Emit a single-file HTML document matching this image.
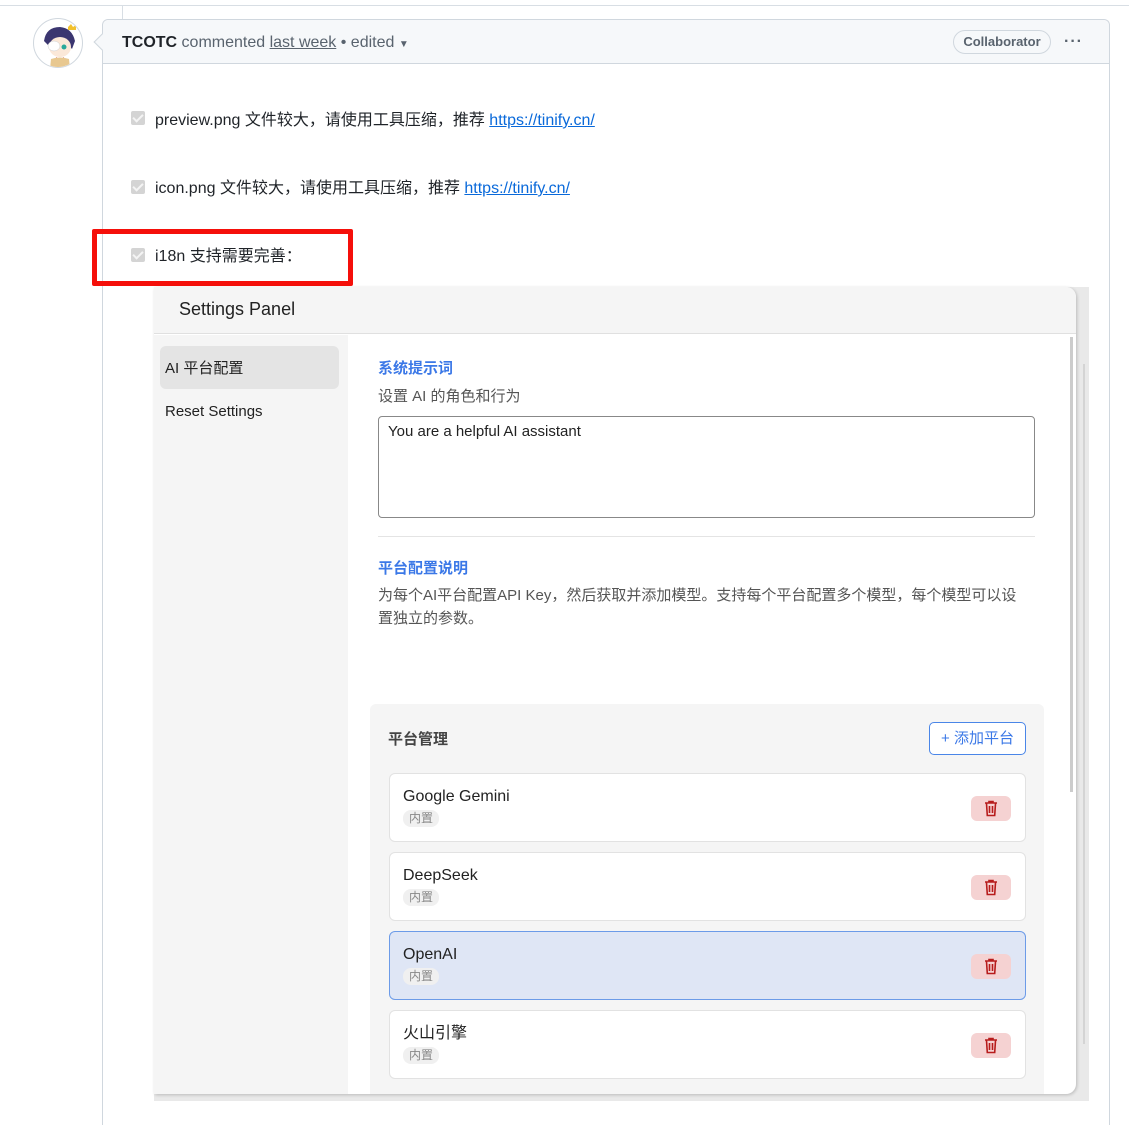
<!DOCTYPE html>
<html style="height:1125px;overflow:hidden"><head><meta charset="utf-8">
<style>
*{box-sizing:border-box;margin:0;padding:0}
body{width:1129px;height:1125px;background:#fff;position:relative;overflow:hidden;font-family:"Liberation Sans","Noto Sans CJK SC",sans-serif;color:#1f2328}
.abs{position:absolute}
.cb{width:14px;height:14px;background:#d4d4d4;border-radius:2px}
.cb:after{content:"";position:absolute;left:4px;top:1px;width:4px;height:8px;border:solid #f4f4f4;border-width:0 2px 2px 0;transform:rotate(45deg)}
.li{font-size:16px;color:#1f2328;line-height:20px}
.li a{color:#0969da;text-decoration:underline}
.card{position:absolute;left:389px;width:637px;height:69px;background:#fff;border:1px solid #e2e2e2;border-radius:6px}
.card .n{position:absolute;left:13px;top:13px;font-size:16px;color:#222;line-height:20px}
.card .t{position:absolute;left:13px;top:36px;font-size:12px;color:#888;background:#f0f0f0;border-radius:8px;padding:0 6px;line-height:17px}
.card .d{position:absolute;right:14px;top:22px;width:40px;height:25px;background:#f5d2d2;border-radius:6px}
.card .d svg{position:absolute;left:12px;top:4px}
</style></head><body>
<div class="abs" style="left:0;top:5px;width:1129px;height:1px;background:#d8dee4"></div>
<div class="abs" style="left:122px;top:5px;width:1px;height:15px;background:#d8dee4"></div>
<div class="abs" style="left:33px;top:18px;width:50px;height:50px;border-radius:50%;border:1px solid #d0d7de;overflow:hidden;background:#fff">
<svg width="50" height="50"><path d="M10 22 Q12 8 26 8 Q38 9 41 22 L38 30 Q30 18 16 28Z" fill="#3b3670"/><ellipse cx="26" cy="28" rx="11" ry="10" fill="#fbe8d8"/><ellipse cx="20" cy="27" rx="6" ry="5" fill="#fff" stroke="#ccc" stroke-width=".5"/><circle cx="30" cy="28" r="2.5" fill="#2aa89a"/><path d="M22 38 L26 41 L30 38 L28 44 L24 44Z" fill="#c62828"/><path d="M17 40 Q26 37 35 40 L36 50 L16 50Z" fill="#e8c890"/><path d="M34 8 l3 -3 l2 3 l3-2 v5 h-8z" fill="#f2c12e"/></svg></div>
<div class="abs" style="left:102px;top:19px;width:1008px;height:1106px;border:1px solid #d0d7de;border-bottom:none;border-radius:6px 6px 0 0"></div>
<div class="abs" style="left:103px;top:20px;width:1006px;height:44px;background:#f6f8fa;border-bottom:1px solid #d0d7de;border-radius:6px 6px 0 0"></div>
<div class="abs" style="left:96px;top:36px;width:12px;height:12px;background:#f6f8fa;border-left:1px solid #d0d7de;border-bottom:1px solid #d0d7de;transform:rotate(45deg)"></div>
<div class="abs" style="left:122px;top:33px;font-size:16px;line-height:20px;color:#59636e;white-space:nowrap"><b style="color:#1f2328;font-weight:600">TCOTC</b> commented <span style="text-decoration:underline">last week</span> • edited <span style="font-size:10px">▼</span></div>
<div class="abs" style="left:953px;top:30px;width:98px;height:24px;border:1px solid #d0d7de;border-radius:12px;font-size:13px;font-weight:600;color:#59636e;text-align:center;line-height:22px">Collaborator</div>
<div class="abs" style="left:1064px;top:33px;font-size:16px;color:#59636e;letter-spacing:1px;font-weight:bold">···</div>
<div class="abs cb" style="left:131px;top:111px"></div>
<div class="abs li" style="left:155px;top:111px">preview.png 文件较大，请使用工具压缩，推荐 <a>https://tinify.cn/</a></div>
<div class="abs cb" style="left:131px;top:180px"></div>
<div class="abs li" style="left:155px;top:179px">icon.png 文件较大，请使用工具压缩，推荐 <a>https://tinify.cn/</a></div>
<div class="abs cb" style="left:131px;top:248px"></div>
<div class="abs li" style="left:155px;top:247px">i18n 支持需要完善：</div>
<div class="abs" style="left:92px;top:229px;width:261px;height:57px;border:5px solid #f50f0a;border-radius:2px"></div>
<div class="abs" style="left:154px;top:287px;width:935px;height:814px;background:#e9e9e9"></div>
<div class="abs" style="left:154px;top:287px;width:922px;height:807px;background:#fff;border-radius:0 10px 10px 0;box-shadow:1px 1px 3px rgba(0,0,0,.2);overflow:hidden">
 <div class="abs" style="left:0;top:0;width:922px;height:47px;background:#f5f5f5;border-bottom:1px solid #e0e0e0"></div>
 <div class="abs" style="left:25px;top:12px;font-size:18px;color:#222">Settings Panel</div>
 <div class="abs" style="left:0;top:48px;width:194px;height:760px;background:#f5f5f5"></div>
 <div class="abs" style="left:6px;top:59px;width:179px;height:43px;background:#e4e4e4;border-radius:6px"></div>
 <div class="abs" style="left:11px;top:70px;font-size:15px;color:#222">AI 平台配置</div>
 <div class="abs" style="left:11px;top:116px;font-size:15px;color:#222">Reset Settings</div>
 <div class="abs" style="left:224px;top:70px;font-size:15px;font-weight:bold;color:#3b78e7">系统提示词</div>
 <div class="abs" style="left:224px;top:98px;font-size:15px;color:#555">设置 AI 的角色和行为</div>
 <div class="abs" style="left:224px;top:129px;width:657px;height:102px;border:1px solid #888;border-radius:4px"></div>
 <div class="abs" style="left:234px;top:136px;font-size:15px;color:#222">You are a helpful AI assistant</div>
 <div class="abs" style="left:224px;top:249px;width:657px;height:1px;background:#e4e4e4"></div>
 <div class="abs" style="left:224px;top:270px;font-size:15px;font-weight:bold;color:#3b78e7">平台配置说明</div>
 <div class="abs" style="left:224px;top:297px;width:644px;font-size:15px;color:#555;line-height:23px">为每个AI平台配置API Key，然后获取并添加模型。支持每个平台配置多个模型，每个模型可以设置独立的参数。</div>
 <div class="abs" style="left:216px;top:417px;width:674px;height:400px;background:#f5f5f5;border-radius:6px"></div>
 <div class="abs" style="left:234px;top:441px;font-size:15px;font-weight:bold;color:#444">平台管理</div>
 <div class="abs" style="left:775px;top:435px;width:97px;height:33px;border:1px solid #4a86e8;border-radius:5px;color:#3b78e7;font-size:15px;text-align:center;line-height:31px;background:#fff">+ 添加平台</div>
 <div class="abs" style="left:916px;top:50px;width:3px;height:455px;background:#ccc"></div>
</div>
<div class="abs" style="left:1083px;top:364px;width:2px;height:680px;background:#d4d4d4"></div>
<div class="card" style="top:773px"><div class="n">Google Gemini</div><div class="t">内置</div><div class="d"><svg width="16" height="17" viewBox="0 0 16 17" fill="none" stroke="#b71c1c" stroke-width="1.6"><path d="M2 3h12M6 3V1.5h4V3M3.5 3.5l.8 12h7.4l.8-12M6.5 6v7M9.5 6v7"/></svg></div></div>
<div class="card" style="top:852px"><div class="n">DeepSeek</div><div class="t">内置</div><div class="d"><svg width="16" height="17" viewBox="0 0 16 17" fill="none" stroke="#b71c1c" stroke-width="1.6"><path d="M2 3h12M6 3V1.5h4V3M3.5 3.5l.8 12h7.4l.8-12M6.5 6v7M9.5 6v7"/></svg></div></div>
<div class="card" style="top:931px;background:#dfe6f5;border-color:#6c9be8"><div class="n">OpenAI</div><div class="t">内置</div><div class="d"><svg width="16" height="17" viewBox="0 0 16 17" fill="none" stroke="#b71c1c" stroke-width="1.6"><path d="M2 3h12M6 3V1.5h4V3M3.5 3.5l.8 12h7.4l.8-12M6.5 6v7M9.5 6v7"/></svg></div></div>
<div class="card" style="top:1010px"><div class="n">火山引擎</div><div class="t">内置</div><div class="d"><svg width="16" height="17" viewBox="0 0 16 17" fill="none" stroke="#b71c1c" stroke-width="1.6"><path d="M2 3h12M6 3V1.5h4V3M3.5 3.5l.8 12h7.4l.8-12M6.5 6v7M9.5 6v7"/></svg></div></div>
</body></html>
